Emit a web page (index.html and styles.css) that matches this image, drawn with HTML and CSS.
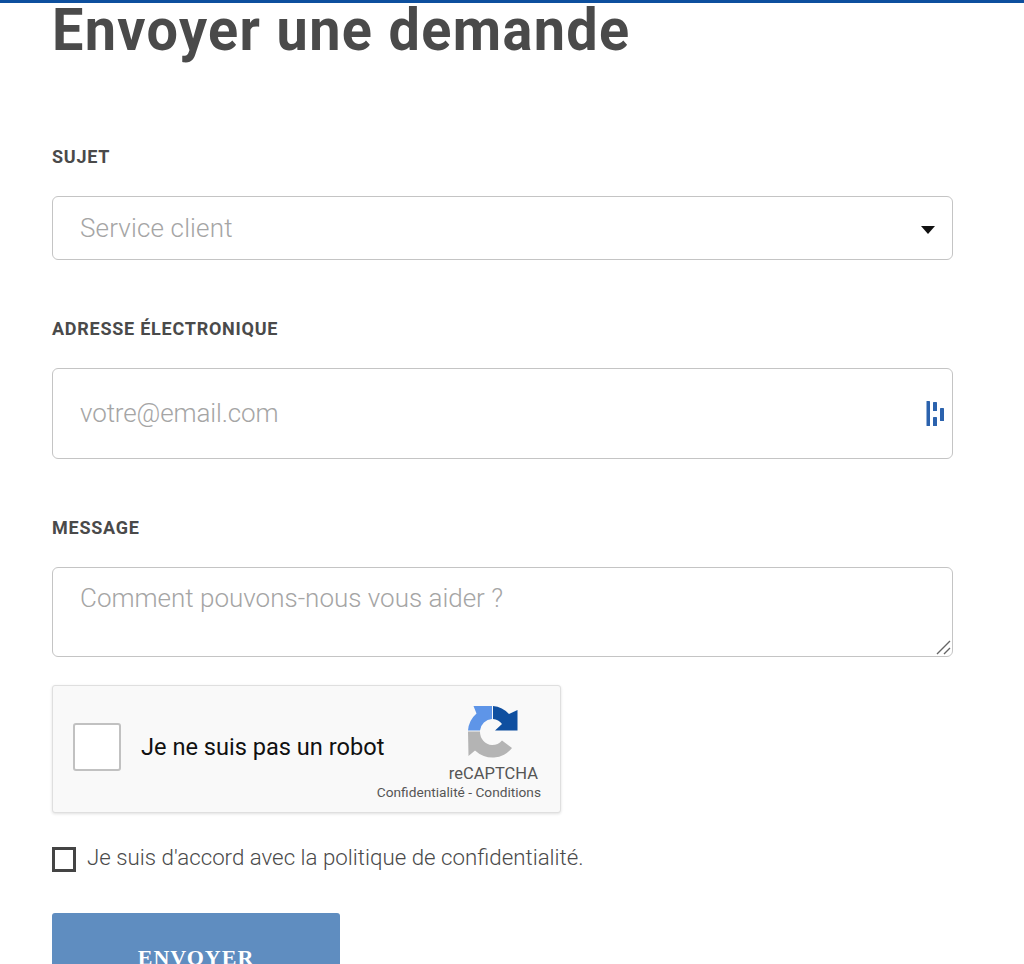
FILE: index.html
```html
<!DOCTYPE html>
<html lang="fr">
<head>
<meta charset="utf-8">
<title>Envoyer une demande</title>
<link rel="stylesheet" href="styles.css">
</head>
<body>
<div class="topbar"></div>
<main class="page">
  <h1 class="title">Envoyer une demande</h1>
  <form class="form">
    <div class="field field-subject">
      <label class="label">SUJET</label>
      <div class="control select">
        <span class="select-value">Service client</span>
        <svg class="caret" width="14" height="8" viewBox="0 0 14 8"><path d="M0 0h14L7 8z" fill="#111"/></svg>
      </div>
    </div>
    <div class="field field-email">
      <label class="label">ADRESSE ÉLECTRONIQUE</label>
      <div class="control email">
        <input class="input" type="text" placeholder="votre@email.com">
        <svg class="dash-icon" width="20" height="26" viewBox="0 0 20 26"><g fill="#2b62ad"><rect x="0.5" y="0" width="3.5" height="25" rx=".6"/><rect x="7" y="1" width="4" height="9" rx=".6"/><rect x="7" y="16" width="4" height="9" rx=".6"/><rect x="14" y="7" width="4" height="13" rx=".6"/></g></svg>
      </div>
    </div>
    <div class="field field-message">
      <label class="label">MESSAGE</label>
      <div class="textarea-wrap">
        <textarea class="control textarea" placeholder="Comment pouvons-nous vous aider ?"></textarea>
        <svg class="grip" width="15" height="15" viewBox="0 0 15 15"><path d="M1 14 14 1M8 14 14 8" stroke="#666" stroke-width="1.4" fill="none"/></svg>
      </div>
    </div>
    <div class="captcha">
      <span class="captcha-box"></span>
      <span class="captcha-text">Je ne suis pas un robot</span>
      <div class="captcha-brand">
        <svg class="captcha-logo" width="50" height="52" viewBox="0 0 50 52">
          <path d="M5.5 0H24V13A13 13 0 0 0 12 24.5H0A25 25 0 0 1 8.5 7.5Z" fill="#5e95e8"/>
          <path d="M25 0A25 25 0 0 1 41 8L49.5 4V24.5H27L34 18A13 13 0 0 0 25 13Z" fill="#0f4fa0"/>
          <path d="M0 25.5H12A13 13 0 0 0 24 39A13 13 0 0 0 34 34.5L44 42A25 25 0 0 1 7 44.5L0.5 50Z" fill="#b4b4b4"/>
        </svg>
        <span class="captcha-name">reCAPTCHA</span>
        <span class="captcha-links">Confidentialité - Conditions</span>
      </div>
    </div>
    <label class="consent">
      <span class="consent-box"></span>
      <span class="consent-text">Je suis d'accord avec la politique de confidentialité.</span>
    </label>
    <button class="submit" type="button">ENVOYER</button>
  </form>
</main>
</body>
</html>
```
FILE: styles.css
```css
* { box-sizing: border-box; }
html, body { margin: 0; height: 964px; overflow: hidden; background: #fff; }
body { font-family: Roboto, "Liberation Sans", sans-serif; color: #4a4a4a; }
.topbar { height: 3px; background: #0d4f9e; }
.page { padding: 0 71px 0 52px; }
.title {
  margin: 0;
  height: 59px;
  font-family: Roboto, sans-serif;
  font-weight: 700;
  font-size: 60px;
  line-height: 54px;
  letter-spacing: 1.45px;
  color: #4a4a4a;
  white-space: nowrap;
  transform: scaleX(.93);
  transform-origin: left center;
}
.form { display: flex; flex-direction: column; }
.field { display: flex; flex-direction: column; }
.field-subject { margin-top: 85px; }
.field-email { margin-top: 59px; }
.field-message { margin-top: 59px; }
.label {
  display: block;
  height: 20px;
  margin-bottom: 29px;
  font-size: 18px;
  font-weight: 700;
  line-height: 20px;
  letter-spacing: .75px;
  color: #4a4a4a;
}
.field-email .label, .field-message .label { height: 19px; margin-bottom: 30px; }
.control {
  width: 901px;
  border: 1px solid #c4c4c4;
  border-radius: 6px;
  background: #fff;
  font-family: Roboto, sans-serif;
  font-weight: 300;
  font-size: 26px;
}
.select {
  height: 64px;
  display: flex;
  align-items: center;
  justify-content: space-between;
  padding: 0 17px 0 27px;
  color: #a5a5a5;
  letter-spacing: .15px;
}
.caret { margin-top: 4px; }
.email {
  height: 91px;
  display: flex;
  align-items: center;
  padding: 0 6px 0 27px;
}
.input {
  flex: 1;
  min-width: 0;
  margin-top: -2px;
  border: 0;
  outline: 0;
  padding: 0;
  font: inherit;
  letter-spacing: -.13px;
  color: #a5a5a5;
  background: transparent;
}
.input::placeholder, .textarea::placeholder { color: #a5a5a5; opacity: 1; }
.dash-icon { flex: none; margin-top: 1px; }
.textarea-wrap { position: relative; width: 901px; height: 90px; }
.textarea {
  display: block;
  height: 90px;
  padding: 14px 27px;
  outline: 0;
  resize: none;
  line-height: 32px;
}
.grip { position: absolute; right: 2px; bottom: 2px; }
.captcha {
  display: flex;
  align-items: center;
  width: 509px;
  height: 128px;
  margin-top: 28px;
  padding: 0 19px 0 20px;
  border: 1px solid #dfdfdf;
  border-radius: 3px;
  background: #f9f9f9;
  box-shadow: 0 1px 3px rgba(0,0,0,.12);
}
.captcha-box {
  flex: none;
  width: 48px;
  height: 48px;
  margin-top: -5px;
  border: 2px solid #c1c1c1;
  border-radius: 3px;
  background: #fff;
}
.captcha-text {
  flex: none;
  margin-left: 20px;
  margin-right: -30px;
  margin-top: -4px;
  font-size: 23.6px;
  color: #111;
  white-space: nowrap;
}
.captcha-brand {
  flex: none;
  margin-left: auto;
  display: flex;
  flex-direction: column;
  align-items: flex-end;
  margin-top: 8px;
}
.captcha-logo { margin-right: 23px; }
.captcha-name { margin-top: 6px; margin-right: 3px; font-size: 16.5px; line-height: 20px; color: #555; }
.captcha-links { margin-top: -1px; font-size: 13.7px; line-height: 18px; color: #555; white-space: nowrap; }
.consent {
  display: flex;
  align-items: center;
  margin-top: 34px;
  height: 26px;
}
.consent-box {
  flex: none;
  width: 24px;
  height: 25px;
  margin-top: -2px;
  border: 3px solid #444;
  background: #fff;
}
.consent-text {
  margin-left: 11px;
  margin-top: -6px;
  font-size: 22.3px;
  font-weight: 300;
  color: #4a4a4a;
  white-space: nowrap;
}
.submit {
  flex: none;
  width: 288px;
  height: 90px;
  margin-top: 40px;
  border: 0;
  border-radius: 3px;
  background: #5f8dc0;
  color: #fff;
  font-family: "Liberation Serif", serif;
  font-weight: 700;
  font-size: 22px;
  letter-spacing: 1px;
}
```
